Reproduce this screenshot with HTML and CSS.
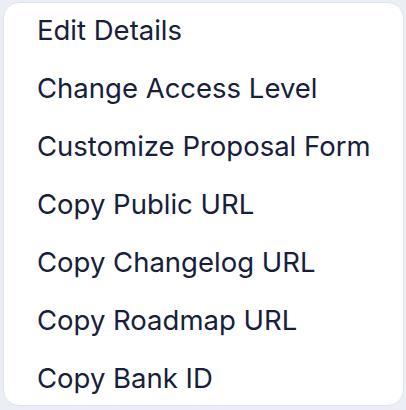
FILE: index.html
```html
<!DOCTYPE html>
<html lang="en">

<head>
    <meta charset="UTF-8">
    <meta name="viewport" content="width=device-width, initial-scale=1.0">
    <title>Menu</title>
    <link rel="stylesheet" href="styles.css">
</head>

<body>
    <div class="menu">
        <div class="menu-item">Edit Details</div>
        <div class="menu-item">Change Access Level</div>
        <div class="menu-item">Customize Proposal Form</div>
        <div class="menu-item">Copy Public URL</div>
        <div class="menu-item">Copy Changelog URL</div>
        <div class="menu-item">Copy Roadmap URL</div>
        <div class="menu-item">Copy Bank ID</div>
    </div>
</body>

</html>
```

FILE: styles.css
```css
body {
    margin: 0;
    padding: 2px 2px 4px 3px;
    background-color: #eceef5;
    font-family: Inter, "Noto Sans", sans-serif;
}

.menu {
    display: flex;
    flex-direction: column;
    background-color: #ffffff;
    border: 1px solid #dfe3ec;
    border-radius: 16px;
    padding: 0 0 0 33px;
    height: 404px;
    box-sizing: border-box;
}

.menu-item {
    font-size: 27.5px;
    line-height: 58px;
    margin-top: -2px;
    margin-bottom: 2px;
    color: #17203a;
    cursor: pointer;
}
```
